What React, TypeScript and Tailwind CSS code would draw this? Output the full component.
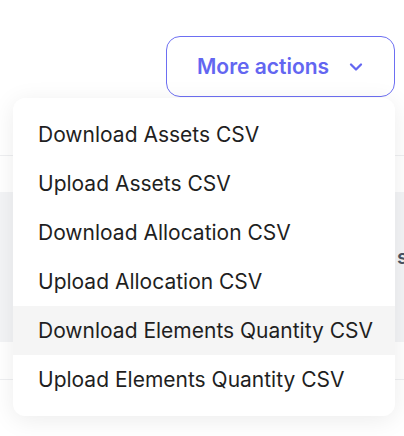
import { ChevronDown } from "lucide-react";

const items = [
  "Download Assets CSV",
  "Upload Assets CSV",
  "Download Allocation CSV",
  "Upload Allocation CSV",
  "Download Elements Quantity CSV",
  "Upload Elements Quantity CSV",
];

export default function App() {
  return (
    <div
      className="relative h-[436px] w-[404px] overflow-hidden bg-white"
      style={{ fontFamily: "Inter, 'Noto Sans', sans-serif" }}
    >
      {/* page behind the menu */}
      <div className="flex flex-col pt-[155px]">
        <div className="h-[37px] border-t border-[#eeeff1]" />
        <div className="flex h-[150px] items-center justify-end bg-[#f3f4f6] pb-[20px]">
          <span className="-mr-[4px] text-[20px] font-semibold text-[#4b5563]">s</span>
        </div>
        <div className="h-[38px] border-b border-[#eeeff1]" />
      </div>

      {/* trigger */}
      <div className="absolute left-[166px] top-[36px]">
        <button className="flex h-[61px] w-[229px] items-center rounded-[14px] border border-[#6d6ff2] bg-white pl-[30px] text-[21px] font-semibold text-[#6366f1]">
          More actions
          <ChevronDown className="ml-[17px] h-5 w-5" strokeWidth={2.75} />
        </button>
      </div>

      {/* menu */}
      <div className="absolute left-[13px] top-[98px] w-[382px] rounded-[12px] bg-white py-[12px] shadow-[0_4px_24px_rgba(0,0,0,0.08)]">
        {items.map((label, i) => (
          <div
            key={label}
            className={`flex h-[49px] items-center pl-[25px] text-[21px] text-[#1f1f1f] ${
              i === 4 ? "bg-[#f5f5f5]" : ""
            }`}
          >
            {label}
          </div>
        ))}
      </div>
    </div>
  );
}
